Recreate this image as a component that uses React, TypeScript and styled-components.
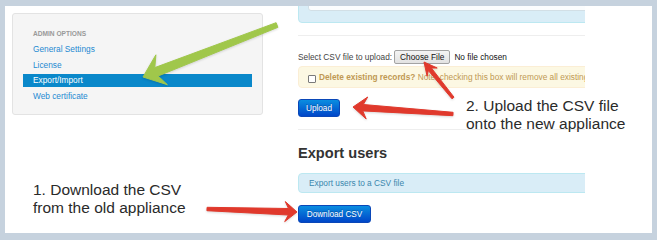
import styled, { createGlobalStyle } from "styled-components";

const GlobalStyle = createGlobalStyle`
  html, body {
    margin: 0;
    padding: 0;
    background: #c6d2de;
  }
  body {
    font-family: "Liberation Sans", Arial, sans-serif;
    width: 657px;
    height: 240px;
    overflow: hidden;
  }
`;

type Pt = [number, number];

interface ArrowSpec {
  tail: Pt;
  tip: Pt;
  tailW: number;
  shaftW: number;
  headL: number;
  headW: number;
  color: string;
}

// builds a tapered skitch-like arrow outline
const arrowPoints = (a: ArrowSpec) => {
  const [x1, y1] = a.tail;
  const [x2, y2] = a.tip;
  const len = Math.hypot(x2 - x1, y2 - y1);
  const ux = (x2 - x1) / len;
  const uy = (y2 - y1) / len;
  const nx = -uy;
  const ny = ux;
  const bx = x2 - ux * a.headL;
  const by = y2 - uy * a.headL;
  const jx = bx + ux * a.headL * 0.28;
  const jy = by + uy * a.headL * 0.28;
  const pts: Pt[] = [
    [x1 + (nx * a.tailW) / 2, y1 + (ny * a.tailW) / 2],
    [jx + (nx * a.shaftW) / 2, jy + (ny * a.shaftW) / 2],
    [bx + (nx * a.headW) / 2, by + (ny * a.headW) / 2],
    [x2, y2],
    [bx - (nx * a.headW) / 2, by - (ny * a.headW) / 2],
    [jx - (nx * a.shaftW) / 2, jy - (ny * a.shaftW) / 2],
    [x1 - (nx * a.tailW) / 2, y1 - (ny * a.tailW) / 2],
  ];
  return pts.map((p) => `${p[0].toFixed(1)},${p[1].toFixed(1)}`).join(" ");
};

const arrows: ArrowSpec[] = [
  { tail: [277, 25], tip: [143, 77], tailW: 5, shaftW: 9, headL: 20, headW: 32, color: "#a0c74b" },
  { tail: [453, 98], tip: [424, 62], tailW: 2.5, shaftW: 4, headL: 13, headW: 13, color: "#e0392c" },
  { tail: [453, 114], tip: [353, 107], tailW: 3.5, shaftW: 6.5, headL: 14, headW: 22, color: "#e0392c" },
  { tail: [207, 209], tip: [297, 212], tailW: 3.5, shaftW: 6.5, headL: 12, headW: 20, color: "#e0392c" },
];

const App = () => {
  return (
    <>
      <GlobalStyle />
      <Frame>
        <LeftColumn>
          <SideCard>
            <NavHeader>Admin options</NavHeader>
            <NavItem>General Settings</NavItem>
            <NavItem>License</NavItem>
            <NavItem active>Export/Import</NavItem>
            <NavItem>Web certificate</NavItem>
          </SideCard>
          <Note>
            1. Download the CSV
            <br />
            from the old appliance
          </Note>
        </LeftColumn>

        <MainColumn>
          <Inner>
            <TopAlert>
              <TopAlertField />
            </TopAlert>
            <Rule top={12} />
            <FileRow>
              <span>Select CSV file to upload:</span>
              <FileButton>Choose File</FileButton>
              <FileName>No file chosen</FileName>
            </FileRow>
            <WarningBox>
              <Check type="checkbox" />
              <strong>Delete existing records?</strong>
              <span>
                &nbsp;Note: checking this box will remove all existing records before importing
              </span>
            </WarningBox>
            <PrimaryButton top={11} width={42}>
              Upload
            </PrimaryButton>
            <Rule top={12} />
            <SectionTitle>Export users</SectionTitle>
            <InfoBox>Export users to a CSV file</InfoBox>
            <PrimaryButton top={12} width={73}>
              Download CSV
            </PrimaryButton>
          </Inner>
        </MainColumn>

        <FloatingNote>
          2. Upload the CSV file
          <br />
          onto the new appliance
        </FloatingNote>

        <ArrowLayer width="657" height="240" viewBox="0 0 657 240">
          {arrows.map((a, i) => (
            <polygon
              key={i}
              points={arrowPoints(a)}
              fill={a.color}
              stroke={a.color}
              strokeWidth={1}
              strokeLinejoin="round"
            />
          ))}
        </ArrowLayer>
      </Frame>
    </>
  );
};

export default App;

const Frame = styled.div`
  position: relative;
  margin: 6px 0 0 5px;
  width: 647px;
  height: 227px;
  background: #ffffff;
  display: flex;
`;

const LeftColumn = styled.div`
  width: 258px;
  padding: 7px 0 0 7px;
  box-sizing: border-box;
  display: flex;
  flex-direction: column;
  flex-shrink: 0;
`;

const SideCard = styled.div`
  width: 251px;
  height: 102px;
  box-sizing: border-box;
  background: #f5f5f5;
  border: 1px solid #e3e3e3;
  border-radius: 3px;
  padding: 13px 10px 0 10px;
  display: flex;
  flex-direction: column;
  gap: 2.8px;
`;

const NavHeader = styled.div`
  height: 13px;
  line-height: 13px;
  padding-left: 10px;
  font-size: 6.6px;
  font-weight: bold;
  text-transform: uppercase;
  color: #999999;
`;

const NavItem = styled.div<{ active?: boolean }>`
  height: 13px;
  line-height: 13px;
  padding-left: 10px;
  font-size: 8.3px;
  color: ${(p) => (p.active ? "#ffffff" : "#1e8ad2")};
  background: ${(p) => (p.active ? "#0a88ca" : "transparent")};
`;

const Note = styled.div`
  margin: 66px 0 0 21px;
  font-size: 15.5px;
  line-height: 18px;
  color: #2a2a2a;
  white-space: nowrap;
`;

const MainColumn = styled.div`
  margin-left: 35px;
  width: 287px;
  height: 100%;
  overflow: hidden;
`;

const Inner = styled.div`
  width: 420px;
  display: flex;
  flex-direction: column;
  align-items: flex-start;
  font-size: 8.3px;
  color: #404040;
`;

const TopAlert = styled.div`
  margin-top: -8px;
  width: 100%;
  height: 25px;
  box-sizing: border-box;
  background: #d9edf7;
  border: 1px solid #bce8f1;
  border-radius: 4px;
  padding: 0 0 0 9px;
`;

const TopAlertField = styled.div`
  height: 12px;
  box-sizing: border-box;
  background: #fbfdfe;
  border: 1px solid #d2dfe6;
  border-radius: 3px;
`;

const Rule = styled.div<{ top: number }>`
  margin-top: ${(p) => p.top}px;
  width: 100%;
  height: 1px;
  background: #eeeeee;
`;

const FileRow = styled.div`
  margin-top: 14px;
  height: 13px;
  display: flex;
  align-items: center;
  white-space: nowrap;
  color: #444444;
`;

const FileButton = styled.div`
  margin-left: 2px;
  height: 14px;
  box-sizing: border-box;
  padding: 0 5px;
  display: flex;
  align-items: center;
  background: linear-gradient(#f4f4f4, #e2e2e2);
  border: 1px solid #a3a3a3;
  border-radius: 2px;
  color: #111111;
`;

const FileName = styled.span`
  margin-left: 4px;
  color: #111111;
`;

const WarningBox = styled.div`
  margin-top: 3px;
  width: 100%;
  height: 22px;
  box-sizing: border-box;
  padding-left: 9px;
  display: flex;
  align-items: center;
  white-space: nowrap;
  background: #fcf8e3;
  border: 1px solid #fbeed5;
  border-radius: 4px;
  color: #c09853;

  strong {
    margin-left: 3px;
  }
`;

const Check = styled.input`
  appearance: none;
  margin: 3px 0 0 0;
  width: 8px;
  height: 8px;
  box-sizing: border-box;
  border: 1px solid #7a7a7a;
  border-radius: 1px;
  background: #ffffff;
`;

const PrimaryButton = styled.div<{ top: number; width: number }>`
  margin-top: ${(p) => p.top}px;
  width: ${(p) => p.width}px;
  height: 18px;
  box-sizing: border-box;
  display: flex;
  align-items: center;
  justify-content: center;
  background: linear-gradient(#0a8ee0, #0046c8);
  border: 1px solid #0a47b8;
  border-radius: 3px;
  color: #ffffff;
  font-size: 8.2px;
  text-shadow: 0 -1px 0 rgba(0, 0, 0, 0.25);
`;

const SectionTitle = styled.div`
  margin-top: 14px;
  height: 18px;
  line-height: 18px;
  font-size: 14.6px;
  font-weight: bold;
  color: #333333;
`;

const InfoBox = styled.div`
  margin-top: 11px;
  width: 100%;
  height: 20px;
  box-sizing: border-box;
  padding-left: 10px;
  display: flex;
  align-items: center;
  background: #d9edf7;
  border: 1px solid #bce8f1;
  border-radius: 4px;
  color: #3a87ad;
`;

const FloatingNote = styled.div`
  position: absolute;
  left: 461px;
  top: 91px;
  font-size: 15.5px;
  line-height: 18px;
  color: #2a2a2a;
  white-space: nowrap;
`;

const ArrowLayer = styled.svg`
  position: absolute;
  left: -5px;
  top: -6px;
  pointer-events: none;
  filter: drop-shadow(0 1px 1px rgba(0, 0, 0, 0.15));
`;
